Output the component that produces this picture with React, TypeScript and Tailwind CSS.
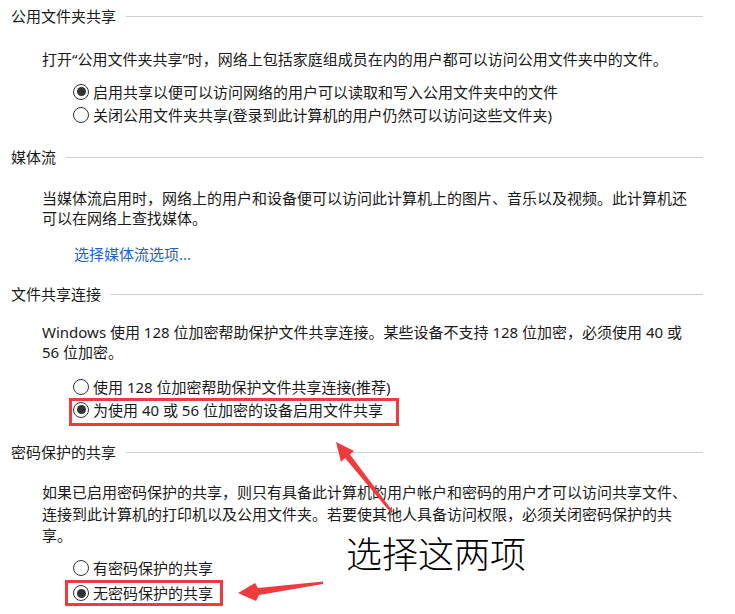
import React from "react";

const FONT = { fontFamily: '"Noto Sans", "Noto Sans CJK SC", sans-serif' };

function Header({ title, className = "" }: { title: string; className?: string }) {
  return (
    <div className={`flex items-center h-[20px] pl-[11px] w-[703px] ${className}`}>
      <span className="text-[15px] leading-[20px] text-[#1a1a1a] whitespace-nowrap">{title}</span>
      <div className="flex-1 h-px bg-[#cfcfcf] ml-[10px]" />
    </div>
  );
}

function Radio({ checked, label, className = "" }: { checked?: boolean; label: string; className?: string }) {
  return (
    <div className={`flex items-center pl-[73px] ${className}`}>
      <span className="w-[16px] h-[16px] rounded-full border border-[#333333] bg-white flex items-center justify-center shrink-0">
        {checked && <span className="w-[9px] h-[9px] rounded-full bg-[#333333]" />}
      </span>
      <span className="ml-[4px] text-[15px] leading-[20px] text-[#1a1a1a] whitespace-nowrap">{label}</span>
    </div>
  );
}

export default function App() {
  return (
    <div className="relative w-[735px] h-[614px] overflow-hidden bg-white" style={FONT}>
      <div className="flex flex-col">
        {/* Section 1 */}
        <Header title="公用文件夹共享" className="mt-[6px]" />
        <p className="mt-[23px] pl-[42px] text-[15px] leading-[20px] text-[#1a1a1a] whitespace-nowrap">
          打开“公用文件夹共享”时，网络上包括家庭组成员在内的用户都可以访问公用文件夹中的文件。
        </p>
        <div className="mt-[11px] flex flex-col">
          <Radio checked label="启用共享以便可以访问网络的用户可以读取和写入公用文件夹中的文件" className="h-[23px]" />
          <Radio label="关闭公用文件夹共享(登录到此计算机的用户仍然可以访问这些文件夹)" className="h-[23px]" />
        </div>

        {/* Section 2 */}
        <Header title="媒体流" className="mt-[21px]" />
        <p className="mt-[21px] pl-[42px] text-[15px] leading-[20px] text-[#1a1a1a] whitespace-nowrap">
          当媒体流启用时，网络上的用户和设备便可以访问此计算机上的图片、音乐以及视频。此计算机还
          <br />
          可以在网络上查找媒体。
        </p>
        <div className="mt-[14px] pl-[74px] h-[20px]">
          <span className="text-[15px] leading-[20px] text-[#1b67c9]">选择媒体流选项...</span>
        </div>

        {/* Section 3 */}
        <Header title="文件共享连接" className="mt-[22px]" />
        <p className="mt-[18px] pl-[42px] text-[15px] leading-[20px] text-[#1a1a1a] whitespace-nowrap">
          Windows 使用 128 位加密帮助保护文件共享连接。某些设备不支持 128 位加密，必须使用 40 或
          <br />
          56 位加密。
        </p>
        <div className="mt-[13px] flex flex-col">
          <Radio label="使用 128 位加密帮助保护文件共享连接(推荐)" className="h-[23px]" />
          <div className="relative h-[23px]">
            <Radio checked label="为使用 40 或 56 位加密的设备启用文件共享" className="h-[23px]" />
            <div className="absolute left-[69px] top-0 w-[330px] h-[28px] border-[3px] border-[#ef3b3d]" />
          </div>
        </div>

        {/* Section 4 */}
        <Header title="密码保护的共享" className="mt-[21px]" />
        <p className="mt-[20px] pl-[42px] text-[15px] leading-[21.5px] text-[#1a1a1a] whitespace-nowrap">
          如果已启用密码保护的共享，则只有具备此计算机的用户帐户和密码的用户才可以访问共享文件、
          <br />
          连接到此计算机的打印机以及公用文件夹。若要使其他人具备访问权限，必须关闭密码保护的共
          <br />
          享。
        </p>
        <div className="mt-[9px] flex flex-col">
          <Radio label="有密码保护的共享" className="h-[25px]" />
          <div className="relative h-[25px]">
            <Radio checked label="无密码保护的共享" className="h-[25px]" />
            <div className="absolute left-[65px] top-[-1px] w-[158px] h-[26px] border-[3px] border-[#ef3b3d]" />
          </div>
        </div>
      </div>

      {/* Annotation text */}
      <div
        className="absolute left-[346px] top-[528px] text-[36px] leading-[48px] text-black whitespace-nowrap"
        style={{ fontFamily: '"Noto Sans CJK SC", sans-serif', fontWeight: 300 }}
      >
        选择这两项
      </div>

      {/* Arrows */}
      <svg className="absolute left-0 top-0 pointer-events-none" width="735" height="614" viewBox="0 0 735 614">
        <polygon
          fill="#ef3b3d"
          points="336,442 354,451 350,454.5 393,511.5 391,513 345,458 341,462"
        />
        <polygon
          fill="#ef3b3d"
          points="238,593 255,583 258,588 323,581.5 323,584 259,595 256,601"
        />
      </svg>
    </div>
  );
}
